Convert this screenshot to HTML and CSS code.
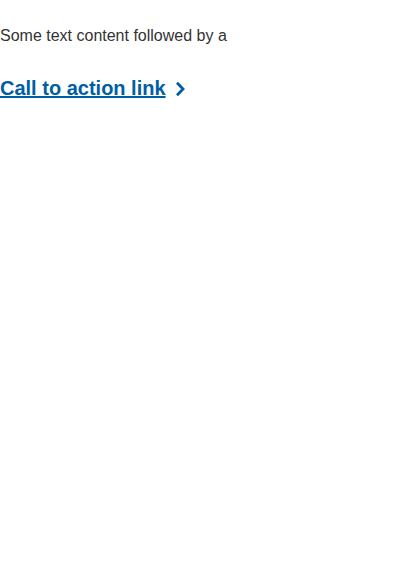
FILE: index.html
```html
<!DOCTYPE html>
<html>
<head>
<meta charset="utf-8">
<link rel="stylesheet" href="styles.css">
</head>
<body>
<p class="text">Some text content followed by a</p>
<a class="cta" href="#">Call to action link<svg class="chev" width="11" height="16" viewBox="0 0 11 16"><path d="M2 1.8 L8 8 L2 14.2" fill="none" stroke="#005ea5" stroke-width="2.8"/></svg></a>
</body>
</html>
```
FILE: styles.css
```css
html, body { margin: 0; padding: 0; background: #fff; }
body { font-family: "Liberation Sans", Arial, sans-serif; }
.text { margin: 24px 0 0; font-size: 16px; line-height: 24px; color: #333; }
.cta { display: inline-flex; align-items: center; margin-top: 27px; font-size: 20px; font-weight: bold; color: #005ea5; text-decoration: underline; line-height: 26px; }
.chev { margin-left: 9px; margin-top: 1px; }
```
